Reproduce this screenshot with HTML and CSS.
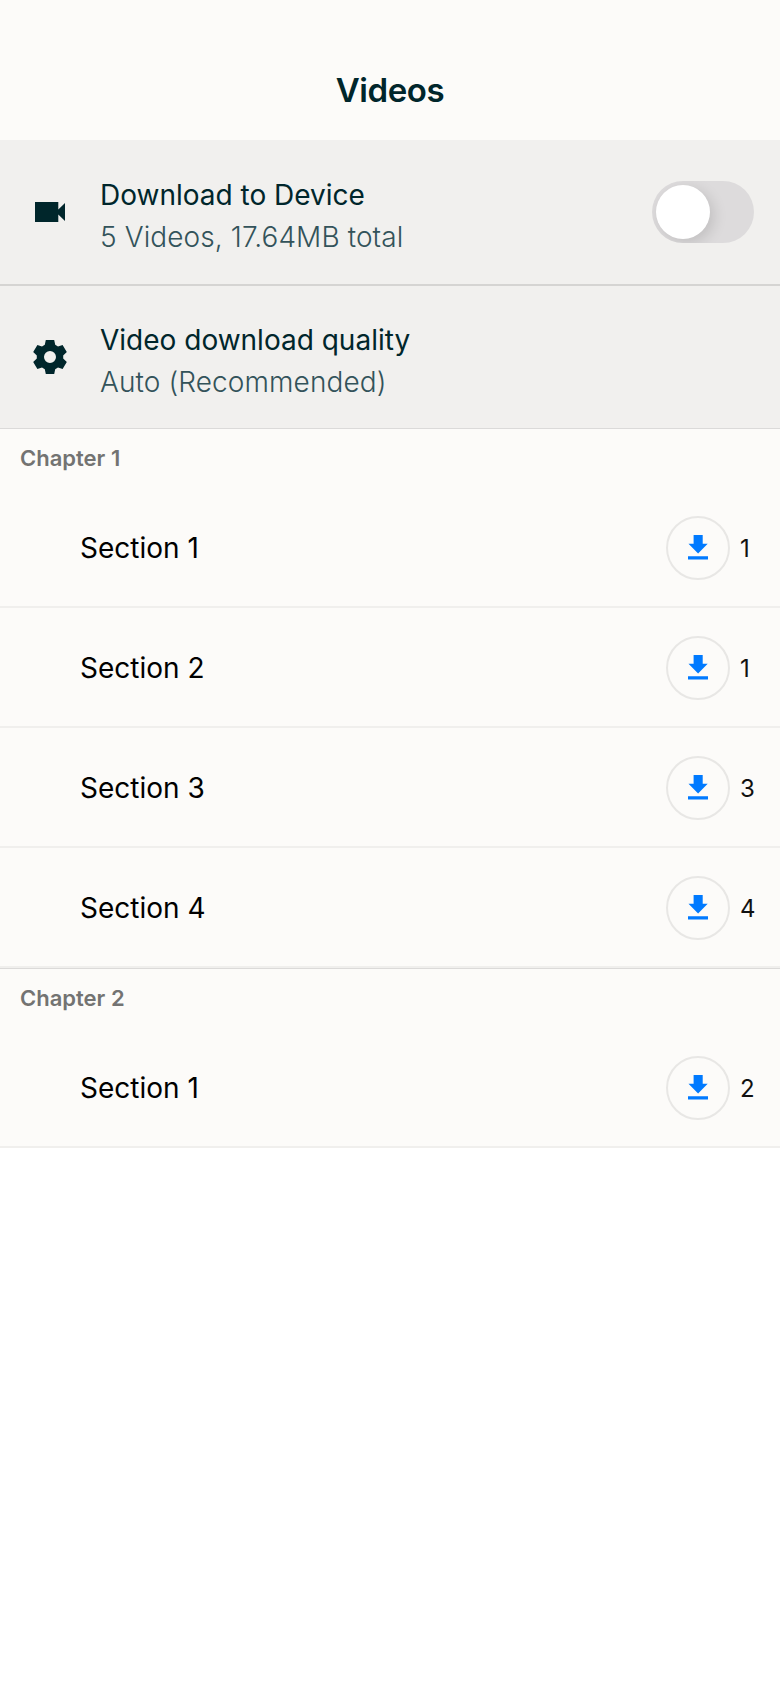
FILE: index.html
```html
<!DOCTYPE html>
<html lang="en">
<head>
<meta charset="utf-8">
<title>Videos</title>
<link rel="stylesheet" href="styles.css">
</head>
<body>
<svg class="defs" aria-hidden="true">
  <symbol id="download" viewBox="0 0 24 28">
    <path d="M7.6 3h9.1v8.7h5L12.1 21.6 2.5 11.7h5.1zM2 24.3h20v3.3H2z"/>
  </symbol>
</svg>
<header class="header"><h1 class="title">Videos</h1></header>
<main>
  <section class="settings">
    <div class="setting">
      <svg class="setting-icon" viewBox="0 0 40 40"><path d="M5 10h23.3v7.6L35 11v18l-6.7-6.6V30H5z"/></svg>
      <div class="setting-text">
        <div class="setting-name">Download to Device</div>
        <div class="setting-detail">5 Videos, 17.64MB total</div>
      </div>
      <div class="toggle"><div class="knob"></div></div>
    </div>
    <div class="setting setting-quality">
      <svg class="setting-icon" viewBox="-20 -20 40 40"><path fill-rule="evenodd" d="M-4.2-17H4.2L5.2-12.2 8-10.6 12.6-12.1 16.8-4.9 13.2-1.6V1.6L16.8 4.9 12.6 12.1 8 10.6 5.2 12.2 4.2 17H-4.2L-5.2 12.2-8 10.6-12.6 12.1-16.8 4.9-13.2 1.6V-1.6L-16.8-4.9-12.6-12.1-8-10.6-5.2-12.2zM0-6A6 6 0 1 0 0 6 6 6 0 1 0 0-6z"/></svg>
      <div class="setting-text">
        <div class="setting-name">Video download quality</div>
        <div class="setting-detail">Auto (Recommended)</div>
      </div>
    </div>
  </section>
  <section>
    <h2 class="chapter">Chapter 1</h2>
    <div class="row"><span class="name">Section 1</span><span class="circle"><svg class="download"><use href="#download"/></svg></span><span class="count">1</span></div>
    <div class="row"><span class="name">Section 2</span><span class="circle"><svg class="download"><use href="#download"/></svg></span><span class="count">1</span></div>
    <div class="row"><span class="name">Section 3</span><span class="circle"><svg class="download"><use href="#download"/></svg></span><span class="count">3</span></div>
    <div class="row"><span class="name">Section 4</span><span class="circle"><svg class="download"><use href="#download"/></svg></span><span class="count">4</span></div>
  </section>
  <section>
    <h2 class="chapter">Chapter 2</h2>
    <div class="row"><span class="name">Section 1</span><span class="circle"><svg class="download"><use href="#download"/></svg></span><span class="count">2</span></div>
  </section>
</main>
</body>
</html>
```
FILE: styles.css
```css
* { box-sizing: border-box; }
body { margin: 0; background: #fff; font-family: Inter, "Liberation Sans", sans-serif; color: #00262b; }
.defs { display: none; }
.header { height: 140px; padding-top: 70px; background: #fcfbf9; text-align: center; }
.title { margin: 0; font-size: 33px; line-height: 40px; font-weight: 600; letter-spacing: -0.4px; }
.setting { display: flex; align-items: center; height: 146px; padding: 0 26px 0 30px; background: #f1f0ee; border-bottom: 2px solid #d5d4d2; }
.setting-quality { height: 142px; border-bottom: 0; }
.setting-icon { width: 40px; height: 40px; fill: #00262b; }
.setting-text { flex: 1; padding: 8px 0 0 30px; font-size: 28px; line-height: 42px; }
.setting-detail { font-weight: 300; color: #33535a; letter-spacing: 0.1px; }
.toggle { width: 102px; height: 62px; padding: 4px; border-radius: 31px; background: #dddbdc; overflow: hidden; }
.knob { width: 54px; height: 54px; border-radius: 50%; background: #fff; box-shadow: 4px 4px 14px rgba(0, 0, 0, .13); }
.chapter { height: 60px; margin: 0; padding: 14px 20px 0; border-top: 1px solid #dbdad9; background: #fcfbf9; font-size: 22px; line-height: 30px; font-weight: 600; color: #737372; }
.row { display: flex; align-items: center; height: 120px; padding: 2px 0 0 80px; border-bottom: 2px solid #f0efed; background: #fcfbf9; color: #000; }
.name { flex: 1; font-size: 28px; }
.circle { display: flex; align-items: center; justify-content: center; width: 64px; height: 64px; border: 2px solid #e8e7e5; border-radius: 50%; }
.download { width: 24px; height: 28px; margin-bottom: 4px; fill: #007aff; }
.count { width: 50px; padding-left: 10px; font-size: 24px; color: #111; }
```
